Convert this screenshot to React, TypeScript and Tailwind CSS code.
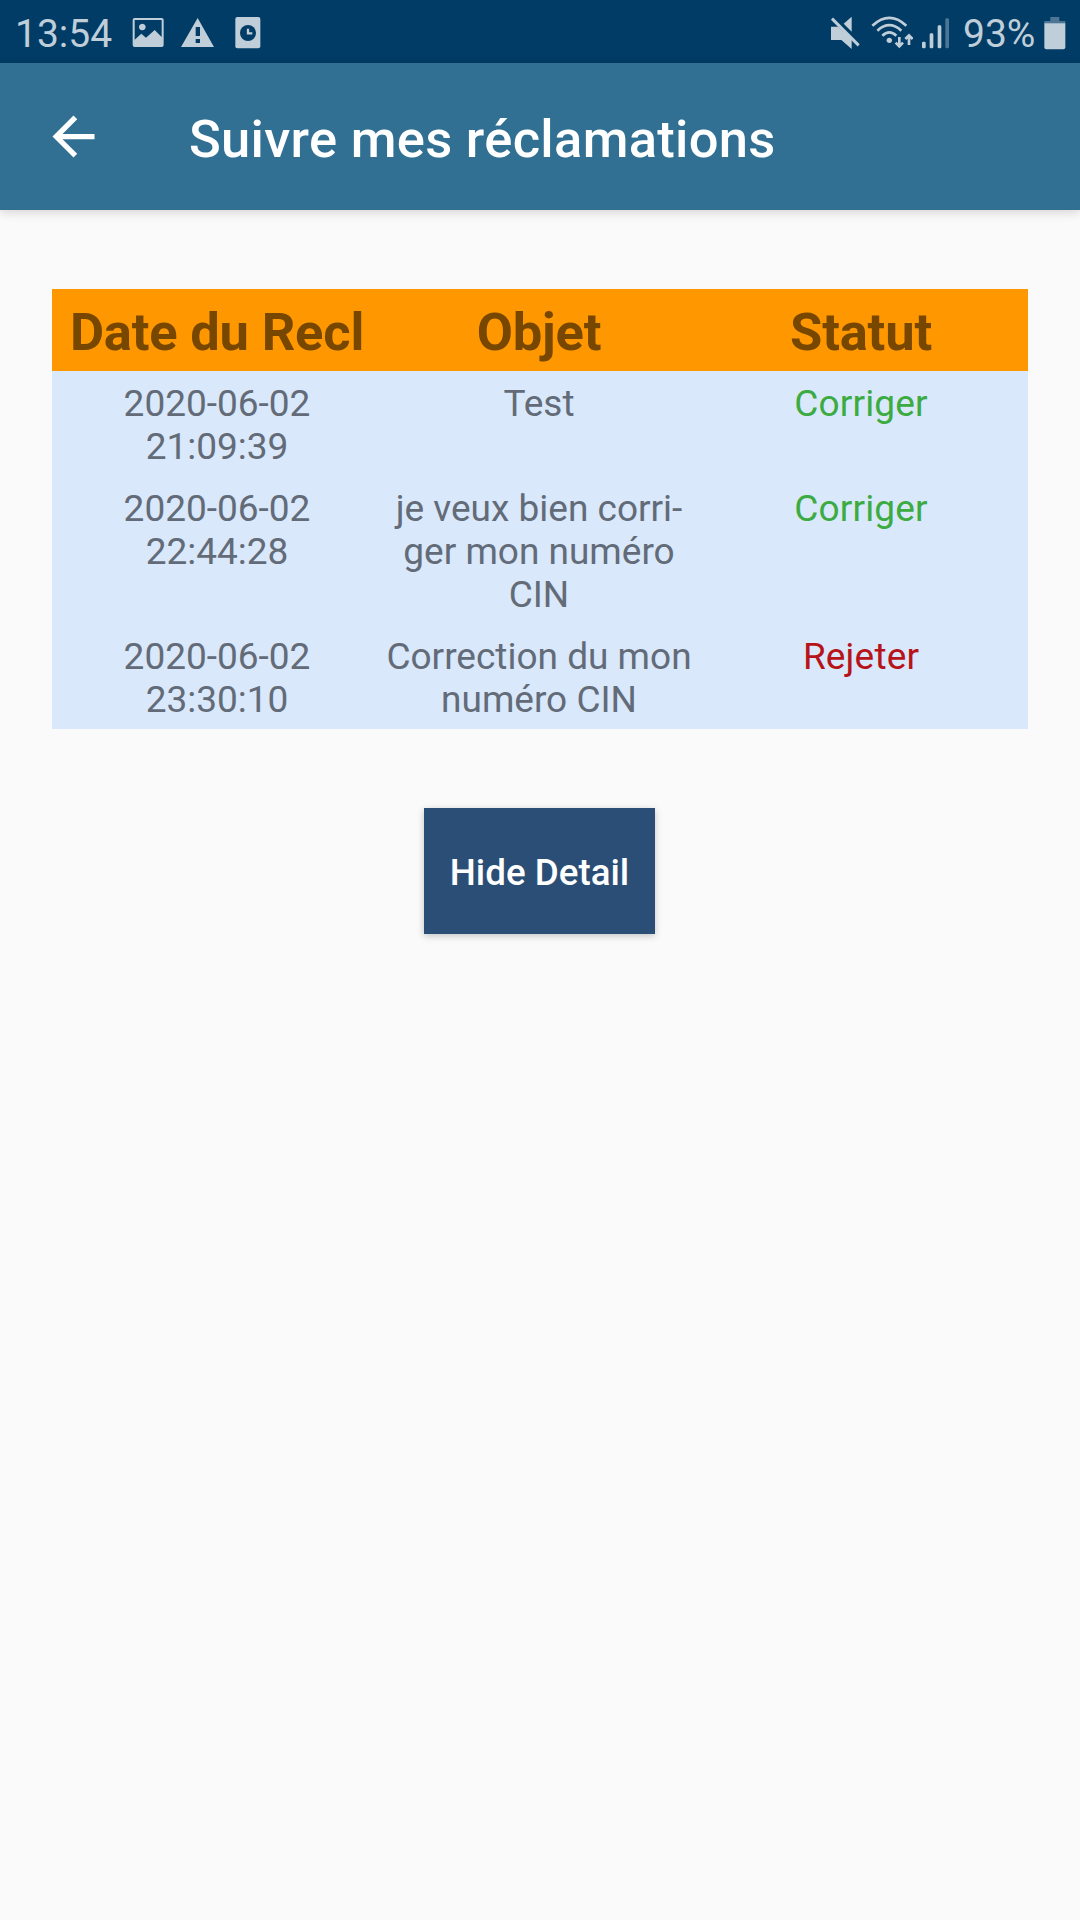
import type { ReactNode } from "react";

type Claim = {
  date: string[];
  subject: string[];
  status: "Corriger" | "Rejeter";
};

const claims: Claim[] = [
  { date: ["2020-06-02", "21:09:39"], subject: ["Test"], status: "Corriger" },
  {
    date: ["2020-06-02", "22:44:28"],
    subject: ["je veux bien corri-", "ger mon numéro", "CIN"],
    status: "Corriger",
  },
  {
    date: ["2020-06-02", "23:30:10"],
    subject: ["Correction du mon", "numéro CIN"],
    status: "Rejeter",
  },
];

function Lines({ lines }: { lines: string[] }) {
  return (
    <div className="flex flex-col items-center whitespace-nowrap">
      {lines.map((line) => (
        <span key={line}>{line}</span>
      ))}
    </div>
  );
}

function ImageIcon() {
  return (
    <svg className="ml-[21px] h-[31px] w-[33px] shrink-0" viewBox="396 51 99 93">
      <path
        fill="currentColor"
        fillRule="evenodd"
        d="M404 54H485Q491 54 491 60V135Q491 141 485 141H404Q398 141 398 135V60Q398 54 404 54ZM404 60V119L424 101L438 113L464 90L485 111V60ZM427 71A10 10 0 1 1 426.900 71Z"
      />
    </svg>
  );
}

function WarningIcon() {
  return (
    <svg className="ml-[16px] h-[31px] w-[33px] shrink-0" viewBox="543 51 99 93">
      <path
        fill="currentColor"
        fillRule="evenodd"
        d="M593 54L642 141H543ZM587 81V108H600V81ZM587 117V129H600V117Z"
      />
    </svg>
  );
}

function ClockIcon() {
  return (
    <svg className="ml-[21px] h-[33px] w-[26px] shrink-0" viewBox="705 48 78 99">
      <rect x="706" y="51" width="75" height="94" rx="6" fill="currentColor" />
      <circle cx="744" cy="99" r="24" fill="#003c66" />
      <path d="M744 86V100H757" fill="none" stroke="currentColor" strokeWidth="7" />
    </svg>
  );
}

function MuteIcon() {
  return (
    <svg className="h-[34px] w-[30px] shrink-0" viewBox="60 45 90 102">
      <path fill="currentColor" d="M125 47V92L101 68Z" />
      <path fill="currentColor" d="M63 77H84L125 115V144L94 117H63Z" />
      <path d="M66 53L146 133" stroke="currentColor" strokeWidth="9" />
    </svg>
  );
}

function WifiIcon() {
  return (
    <svg className="ml-[11px] h-[34px] w-[42px] shrink-0" viewBox="183 45 126 102">
      <g fill="none" stroke="currentColor" strokeWidth="8">
        <path d="M187 74Q238 27 289 74" />
        <path d="M202 89Q238 56 274 89" />
        <path d="M217 104Q238 84 259 104" />
      </g>
      <circle cx="238" cy="118" r="8" fill="currentColor" />
      <g fill="none" stroke="currentColor" strokeWidth="8">
        <path d="M268 108V136M257 125L268 136L279 125" />
        <path d="M297 132V104M286 114L297 103L308 114" />
      </g>
    </svg>
  );
}

function SignalIcon() {
  return (
    <svg className="ml-[8px] h-[34px] w-[29px] shrink-0" viewBox="333 45 87 102">
      <g fill="currentColor">
        <rect x="336" y="122" width="11" height="20" rx="4" />
        <rect x="359" y="97" width="11" height="45" rx="4" />
        <rect x="383" y="73" width="11" height="69" rx="4" />
        <rect x="406" y="52" width="11" height="90" rx="4" opacity=".4" />
      </g>
    </svg>
  );
}

function BatteryIcon() {
  return (
    <svg className="h-[34px] w-[22px] shrink-0" viewBox="701 47 66 102">
      <path fill="currentColor" opacity=".4" d="M720 50H747V62H765V70H702V62H720Z" />
      <path fill="currentColor" d="M702 69H765V141Q765 147 759 147H708Q702 147 702 141Z" />
    </svg>
  );
}

function HeaderCell({ children }: { children: ReactNode }) {
  return <div className="whitespace-nowrap text-center">{children}</div>;
}

export default function App() {
  return (
    <div className="flex h-[1920px] w-[1080px] flex-col overflow-hidden bg-[#fafafa] font-[Roboto,sans-serif]">
      <div className="flex h-[63px] items-center justify-between bg-[#003c66] pt-[2px] pl-[15px] pr-[14px] text-[39px] leading-[45px] text-[#bfced9]">
        <div className="flex items-center">
          <span className="w-[96px] pt-[4px]">13:54</span>
          <ImageIcon />
          <WarningIcon />
          <ClockIcon />
        </div>
        <div className="flex items-center">
          <MuteIcon />
          <WifiIcon />
          <SignalIcon />
          <span className="ml-[13px] w-[81px] pt-[4px]">93%</span>
          <BatteryIcon />
        </div>
      </div>

      <header className="z-10 flex h-[147px] items-center bg-[#317093] pl-[42px] text-white shadow-[0_2px_10px_rgba(0,0,0,0.16)]">
        <svg className="size-[63px]" viewBox="0 0 24 24" fill="currentColor">
          <path d="M20 11H7.830l5.590-5.590L12 4l-8 8 8 8 1.410-1.410L7.830 13H20v-2z" />
        </svg>
        <h1 className="pl-[84px] pt-[4px] text-[52.5px] font-medium leading-[62px] tracking-[0.3px]">
          Suivre mes réclamations
        </h1>
      </header>

      <main className="flex flex-col items-center pt-[79px]">
        <div className="w-[976px] bg-[#d9e8fb] text-[37px] leading-[43px] text-[#626b77]">
          <div className="grid h-[82px] grid-cols-[322px_322px_322px] items-center bg-[#ff9800] pl-[4px] pt-[4px] text-[52.5px] font-bold leading-[62px] tracking-[-0.2px] text-[#774700]">
            <HeaderCell>Date du Recl</HeaderCell>
            <HeaderCell>Objet</HeaderCell>
            <HeaderCell>Statut</HeaderCell>
          </div>
          {claims.map((claim) => (
            <div
              key={claim.date.join(" ")}
              className="grid grid-cols-[322px_322px_322px] pb-[8px] pl-[4px] pt-[11px]"
            >
              <Lines lines={claim.date} />
              <Lines lines={claim.subject} />
              <div
                className={
                  claim.status === "Corriger"
                    ? "text-center tracking-[0.15px] text-[#3bab42]"
                    : "text-center tracking-[0.15px] text-[#b71419]"
                }
              >
                {claim.status}
              </div>
            </div>
          ))}
        </div>

        <button className="mr-px mt-[79px] h-[126px] w-[231px] bg-[#2b4e76] pt-[3px] text-[36.75px] font-medium leading-[43px] text-white shadow-[0_2px_7px_rgba(0,0,0,0.22)]">
          Hide Detail
        </button>
      </main>
    </div>
  );
}
